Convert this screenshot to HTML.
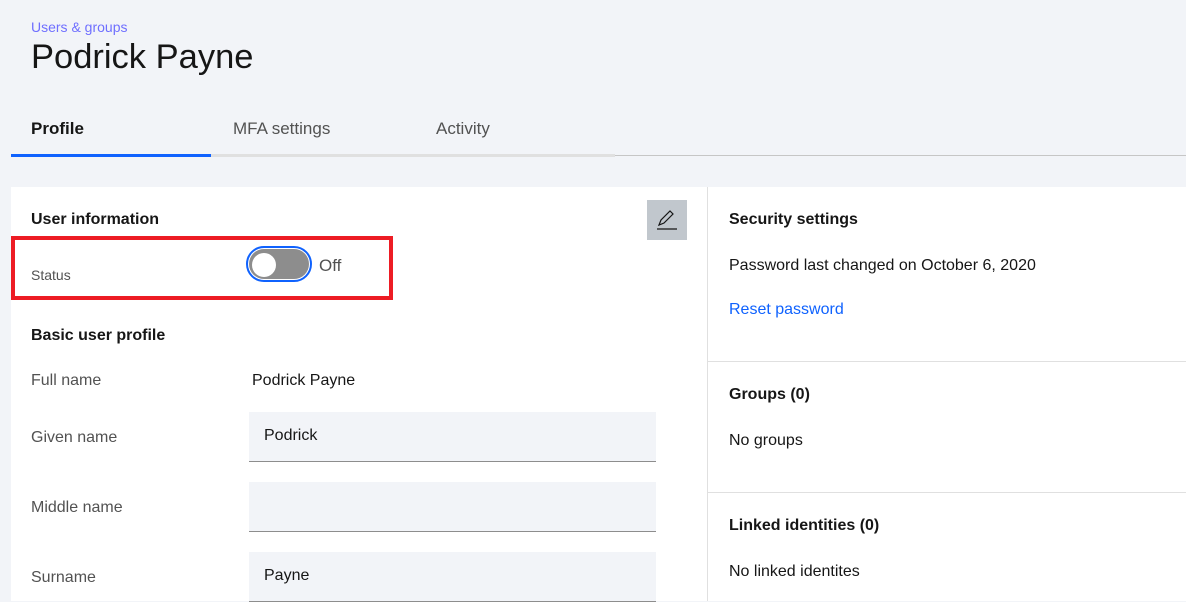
<!DOCTYPE html>
<html><head><style>
body{margin:0;width:1186px;height:601px;overflow:hidden;background:#f2f4f8;font-family:"Liberation Sans",sans-serif;color:#161616;position:relative}
.a{position:absolute;white-space:nowrap}
.lbl{font-size:16px;color:#525252}
.inp{position:absolute;left:249px;width:407px;height:50px;background:#f2f4f8;border-bottom:1px solid #8d8d8d;box-sizing:border-box;font-size:16px;padding:15px 15px}
h3{margin:0;font-size:16px;font-weight:bold}
</style></head><body>
<div class="a" style="left:31px;top:19px;font-size:14px;color:#6f6fff">Users &amp; groups</div>
<div class="a" style="left:31px;top:38px;font-size:34.5px">Podrick Payne</div>
<div class="a" style="left:31px;top:119px;font-size:17px;font-weight:bold">Profile</div>
<div class="a" style="left:233px;top:119px;font-size:17px;color:#525252">MFA settings</div>
<div class="a" style="left:436px;top:119px;font-size:17px;color:#525252">Activity</div>
<div class="a" style="left:615px;top:155px;width:571px;height:1px;background:#c6c6c6"></div>
<div class="a" style="left:211px;top:154px;width:404px;height:3px;background:#e0e0e0"></div>
<div class="a" style="left:11px;top:154px;width:200px;height:3px;background:#0f62fe"></div>
<div class="a" style="left:11px;top:187px;width:696px;height:414px;background:#fff"></div>
<div class="a" style="left:708px;top:187px;width:478px;height:414px;background:#fff"></div>
<div class="a" style="left:707px;top:187px;width:1px;height:414px;background:#e0e0e0"></div>
<div class="a" style="left:708px;top:361px;width:478px;height:1px;background:#e0e0e0"></div>
<div class="a" style="left:708px;top:492px;width:478px;height:1px;background:#e0e0e0"></div>
<h3 class="a" style="left:31px;top:211px">User information</h3>
<div class="a" style="left:647px;top:200px;width:40px;height:40px;background:#c1c7cd">
<svg width="40" height="40" viewBox="0 0 40 40"><path d="M12 25l2-5 9-9 3 3-9 9z" fill="none" stroke="#161616" stroke-width="1.2"/><path d="M10 29h20" stroke="#161616" stroke-width="1.2"/></svg></div>
<div class="a" style="left:11px;top:236px;width:374px;height:56px;border:4px solid #ed1c24"></div>
<div class="a" style="left:31px;top:267px;font-size:14px;color:#525252">Status</div>
<div class="a" style="left:246px;top:246px;width:62px;height:32px;border:2px solid #0f62fe;border-radius:18px;background:#fff"></div>
<div class="a" style="left:249px;top:249px;width:60px;height:30px;border-radius:15px;background:#8d8d8d"></div>
<div class="a" style="left:252px;top:253px;width:24px;height:24px;border-radius:12px;background:#fff"></div>
<div class="a" style="left:319px;top:256px;font-size:17px;color:#525252">Off</div>
<h3 class="a" style="left:31px;top:327px">Basic user profile</h3>
<div class="a lbl" style="left:31px;top:372px">Full name</div>
<div class="a" style="left:252px;top:372px;font-size:16px">Podrick Payne</div>
<div class="a lbl" style="left:31px;top:429px">Given name</div>
<div class="inp" style="top:412px">Podrick</div>
<div class="a lbl" style="left:31px;top:499px">Middle name</div>
<div class="inp" style="top:482px"></div>
<div class="a lbl" style="left:31px;top:569px">Surname</div>
<div class="inp" style="top:552px">Payne</div>
<h3 class="a" style="left:729px;top:211px">Security settings</h3>
<div class="a" style="left:729px;top:257px;font-size:16px">Password last changed on October 6, 2020</div>
<div class="a" style="left:729px;top:301px;font-size:16px;color:#0f62fe">Reset password</div>
<h3 class="a" style="left:729px;top:386px">Groups (0)</h3>
<div class="a" style="left:729px;top:432px;font-size:16px">No groups</div>
<h3 class="a" style="left:729px;top:517px">Linked identities (0)</h3>
<div class="a" style="left:729px;top:563px;font-size:16px">No linked identites</div>
</body></html>
